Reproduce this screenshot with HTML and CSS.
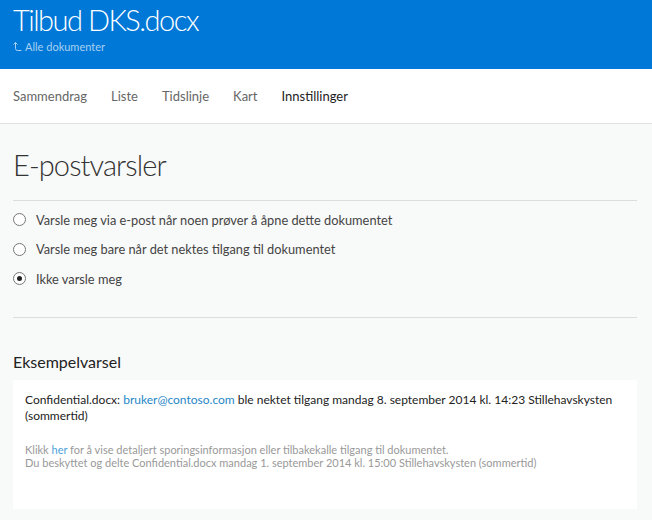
FILE: index.html
```html
<!DOCTYPE html>
<html>
<head>
    <title>Tilbud DKS.docx - Innstillinger</title>
    <link rel="stylesheet" href="styles.css">
</head>
<body>
    <div class="header">
        <div class="doc-title">Tilbud DKS.docx</div>
        <div class="back-link">
            <svg width="9" height="11" viewBox="0 0 9 11"><path d="M2.5 1.5 V7.5 Q2.5 9.5 4.5 9.5 H8.5 M0.5 3.5 L2.5 1.5 L4.5 3.5" fill="none" stroke="currentColor" stroke-width="1"/></svg>
            <span>Alle dokumenter</span>
        </div>
    </div>

    <div class="nav">
        <span>Sammendrag</span>
        <span>Liste</span>
        <span>Tidslinje</span>
        <span>Kart</span>
        <span class="active">Innstillinger</span>
    </div>

    <div class="content">
        <h1 class="page-title">E-postvarsler</h1>

        <div class="options">
            <label class="option"><span class="radio"></span>Varsle meg via e-post når noen prøver å åpne dette dokumentet</label>
            <label class="option"><span class="radio"></span>Varsle meg bare når det nektes tilgang til dokumentet</label>
            <label class="option"><span class="radio checked"></span>Ikke varsle meg</label>
        </div>

        <h2 class="section-title">Eksempelvarsel</h2>

        <div class="sample">
            <p class="sample-main">Confidential.docx: <span class="link">bruker@contoso.com</span> ble nektet tilgang mandag 8. september 2014 kl. 14:23 Stillehavskysten (sommertid)</p>
            <p class="sample-foot">Klikk <span class="link-light">her</span> for å vise detaljert sporingsinformasjon eller tilbakekalle tilgang til dokumentet.<br>Du beskyttet og delte Confidential.docx mandag 1. september 2014 kl. 15:00 Stillehavskysten (sommertid)</p>
        </div>
    </div>
</body>
</html>
```

FILE: styles.css
```css
body {
    margin: 0;
    font-family: 'Lato', 'Open Sans', sans-serif;
    background: #f8f9f9;
    color: #222;
}
.header {
    background: #0078d7;
    color: #fff;
    height: 69px;
    padding: 0 13px;
    box-sizing: border-box;
}
.doc-title {
    font-size: 29px;
    font-weight: 300;
    letter-spacing: -1.5px;
    line-height: 38px;
    padding-top: 1px;
}
.back-link {
    display: flex;
    align-items: center;
    gap: 3px;
    font-size: 11px;
    color: #a9d0f2;
    margin-top: 1px;
}
.nav {
    background: #fff;
    height: 54px;
    border-bottom: 1px solid #e0e0e0;
    display: flex;
    align-items: center;
    gap: 24px;
    padding: 0 13px;
    font-size: 13px;
    color: #666;
}
.nav .active {
    color: #222;
}
.content {
    padding: 0 15px 0 13px;
}
.page-title {
    margin: 0;
    padding: 22px 0 16px;
    font-size: 29px;
    font-weight: 300;
    letter-spacing: -0.9px;
    line-height: 38px;
    color: #333;
    border-bottom: 1px solid #dcdede;
}
.options {
    padding: 4px 0 23px;
    border-bottom: 1px solid #dcdede;
}
.option {
    display: flex;
    align-items: center;
    height: 29.5px;
    font-size: 12.8px;
    color: #444;
}
.radio {
    width: 11px;
    height: 11px;
    border: 1px solid #777;
    border-radius: 50%;
    margin-right: 10px;
    background: #fff;
    display: flex;
    align-items: center;
    justify-content: center;
}
.radio.checked::after {
    content: "";
    width: 5px;
    height: 5px;
    border-radius: 50%;
    background: #222;
}
.section-title {
    margin: 0;
    padding: 33px 0 7px;
    font-size: 16px;
    font-weight: 400;
    line-height: 22px;
    color: #222;
}
.sample {
    background: #fff;
    padding: 12px 12px 40px;
}
.sample-main {
    margin: 0;
    font-size: 12px;
    line-height: 16px;
    color: #222;
}
.link {
    color: #1f87c6;
}
.sample-foot {
    margin: 19px 0 0;
    font-size: 11px;
    line-height: 13px;
    color: #999;
}
.link-light {
    color: #4ba3d8;
}
```
